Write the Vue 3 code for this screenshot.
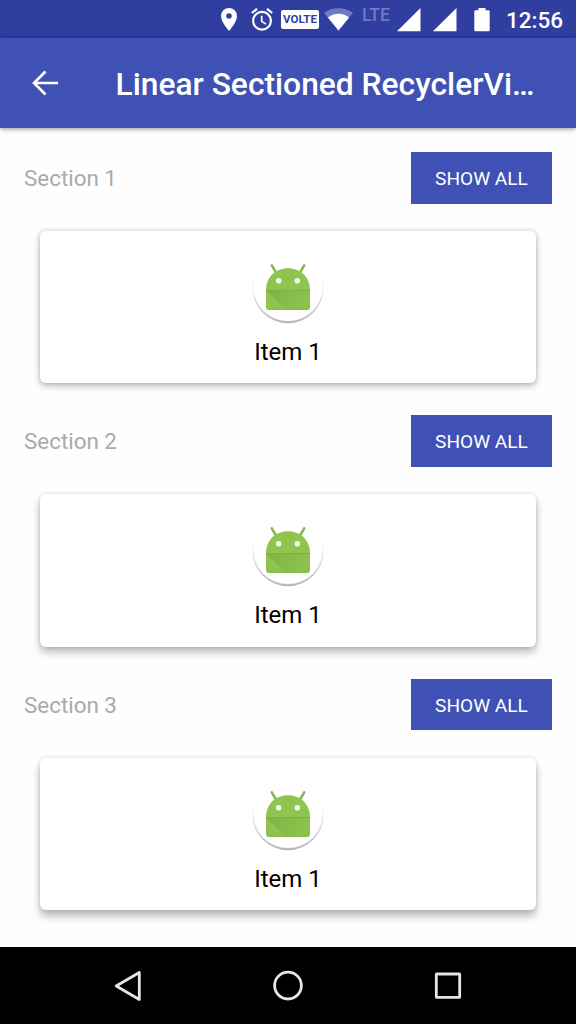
<script setup>
const sections = [1, 2, 3]
</script>

<template>
  <div class="screen">
    <div class="status">
      <svg class="pin" width="16" height="23" viewBox="0 0 16 23"><path fill="#fff" fill-rule="evenodd" d="M8 0a8 8 0 0 0-8 8c0 6 8 15 8 15s8-9 8-15a8 8 0 0 0-8-8zm0 5.2a2.8 2.8 0 1 1 0 5.6 2.8 2.8 0 0 1 0-5.6z" /></svg>
      <svg class="alarm" width="22" height="23" viewBox="0 0 22 23" fill="none" stroke="#fff" stroke-width="2.2"><circle cx="11" cy="12.8" r="8.9" /><path d="M.8 5 6 .9M21.2 5 16 .9" /><path d="M10.7 7.8v5.6l4.3 2.7" stroke-width="1.7" /></svg>
      <span class="volte">VOLTE</span>
      <svg class="wifi" width="29" height="23" viewBox="0 0 29 23"><path fill="#7079c2" d="M14.5 22.5 0 5Q6 .2 14.5.2T29 5z" /><path fill="#fff" d="M14.5 22.5 3.9 9.5Q8.4 5.7 14.5 5.7T25.1 9.5z" /></svg>
      <span class="lte">LTE</span>
      <svg class="signal" width="24" height="24" viewBox="0 0 24 24"><path fill="#fff" d="M0 23.2 23.5 0v23.2z" /></svg>
      <svg class="signal second" width="24" height="24" viewBox="0 0 24 24"><path fill="#fff" d="M0 23.2 23.5 0v23.2z" /></svg>
      <svg class="battery" width="16" height="24" viewBox="0 0 16 24"><path fill="#fff" d="M4.5 0h7v2.2h3q1.2 0 1.2 1.2v18.8q0 1.1-1.2 1.1h-13Q.3 23.3.3 22.2V3.4q0-1.2 1.2-1.2h3z" /></svg>
      <span class="time">12:56</span>
    </div>

    <header class="toolbar">
      <svg class="back" width="28" height="28" viewBox="0 0 28 28" fill="none" stroke="#fff" stroke-width="2.7"><path d="M27 14H3M14.5 2.5 3 14l11.5 11.5" /></svg>
      <h1>Linear Sectioned RecyclerVi…</h1>
    </header>

    <main>
      <section v-for="n in sections" :key="n">
        <div class="heading">
          <span class="label">Section {{ n }}</span>
          <button>SHOW ALL</button>
        </div>
        <div class="card">
          <svg class="droid" width="76" height="76" viewBox="0 0 76 76">
            <defs>
              <linearGradient :id="'rim' + n" x1="0" y1="0" x2="0" y2="1">
                <stop offset="0.35" stop-color="#000" stop-opacity="0.02" />
                <stop offset="1" stop-color="#000" stop-opacity="0.28" />
              </linearGradient>
              <linearGradient :id="'fold' + n" gradientUnits="userSpaceOnUse" x1="18" y1="40" x2="44" y2="60">
                <stop offset="0" stop-color="#689f38" stop-opacity="0.45" />
                <stop offset="1" stop-color="#689f38" stop-opacity="0.08" />
              </linearGradient>
            </defs>
            <circle cx="38" cy="37.5" r="35.7" :fill="'url(#rim' + n + ')'" />
            <circle cx="38" cy="36.2" r="34.9" fill="#fff" />
            <path d="m21.8 15.3 4.5 7.7M54.2 15.3 49.7 23" stroke="#86b64e" stroke-width="2.5" stroke-linecap="round" />
            <path d="M16 40.5C16 27.5 25 18.3 38 18.3S60 27.5 60 40.5V57q0 2.7-2.7 2.7H18.700Q16 59.700 16 57z" fill="#8fc44f" />
            <path d="M16 40.5h44V57q0 2.7-2.7 2.7H36z" :fill="'url(#fold' + n + ')'" />
            <path d="M16 40.5h44" stroke="#7cae49" stroke-width="1" />
            <path d="M17.5 59.3h41" stroke="#7fb44a" stroke-width="1" />
            <circle cx="28.7" cy="30.8" r="2.8" fill="#f4f9ef" /><circle cx="47.3" cy="30.8" r="2.8" fill="#f4f9ef" />
          </svg>
          <span class="item">Item 1</span>
        </div>
      </section>
    </main>

    <nav>
      <svg width="32" height="32" viewBox="0 0 32 32"><path d="M27.3 2.5v27L4.2 16z" /></svg>
      <svg width="32" height="32" viewBox="0 0 32 32"><circle cx="16" cy="15.6" r="13.4" /></svg>
      <svg width="32" height="32" viewBox="0 0 32 32"><rect x="4.3" y="4" width="23.4" height="23.4" rx=".5" /></svg>
    </nav>
  </div>
</template>

<style>
body { margin: 0; overflow: hidden; }
</style>

<style scoped>
.screen { width: 576px; height: 1024px; display: flex; flex-direction: column; background: #fefefe; font-family: Roboto, sans-serif; overflow: hidden; }
svg { flex: none; display: block; }
.status { box-sizing: border-box; height: 38px; flex: none; display: flex; align-items: flex-start; background: #303f9f; color: #fff; padding-top: 8px; white-space: nowrap; }
.pin { margin-left: 221px; }
.alarm { margin-left: 14px; }
.volte { box-sizing: border-box; width: 38px; height: 19px; margin: 2px 0 0 8px; border-radius: 2px; background: #fff; color: #303f9f; font-size: 11.5px; line-height: 19px; font-weight: 700; text-align: center; }
.wifi { margin-left: 5px; }
.lte { width: 29px; margin: -2px 0 0 9px; color: #7079c2; font-size: 17.5px; line-height: 18px; font-weight: 500; }
.signal { margin-left: 6px; }
.signal.second { margin-left: 12px; }
.battery { margin: -.5px 0 0 17px; }
.time { margin: -1px 0 0 16px; font-size: 22.5px; line-height: 26px; font-weight: 500; }
.toolbar { height: 90px; flex: none; display: flex; align-items: center; background: #3f51b5; color: #fff; box-shadow: 0 1px 5px rgba(0,0,0,.42); }
.back { margin-left: 31px; }
h1 { margin: 4px 0 0 56.5px; font-size: 31.75px; line-height: 40px; font-weight: 500; white-space: nowrap; }
main { flex: 1; min-height: 0; padding: 24px 24px 0; }
section { height: 263.4px; }
.heading { height: 51.5px; display: flex; align-items: center; justify-content: space-between; }
.label { padding-top: .5px; color: #aaa; font-size: 22.4px; line-height: 28px; }
button { width: 141px; height: 51.5px; border: 0; padding: 1.5px 0 0; background: #3f51b5; color: #fff; font: 400 19.1px Roboto, sans-serif; }
.card { box-sizing: border-box; height: 152.5px; margin: 27.4px 16px 0; padding-top: 19px; display: flex; flex-direction: column; align-items: center; border-radius: 6px; background: #fff; }
section:nth-child(1) .card { box-shadow: 0 3px 7px rgba(0,0,0,.25), 0 0 5px rgba(0,0,0,.14); }
section:nth-child(2) .card { box-shadow: 0 5px 8px rgba(0,0,0,.28), 0 0 4px rgba(0,0,0,.12); }
section:nth-child(3) .card { box-shadow: 0 6px 9px rgba(0,0,0,.28), 0 0 4px rgba(0,0,0,.12); }
.item { margin-top: 12px; color: #000; font-size: 24px; line-height: 28px; }
nav { height: 77px; flex: none; display: flex; align-items: center; justify-content: center; gap: 128px; background: #000; fill: none; stroke: #e6e6e6; stroke-width: 2.8; stroke-linejoin: round; }
</style>
